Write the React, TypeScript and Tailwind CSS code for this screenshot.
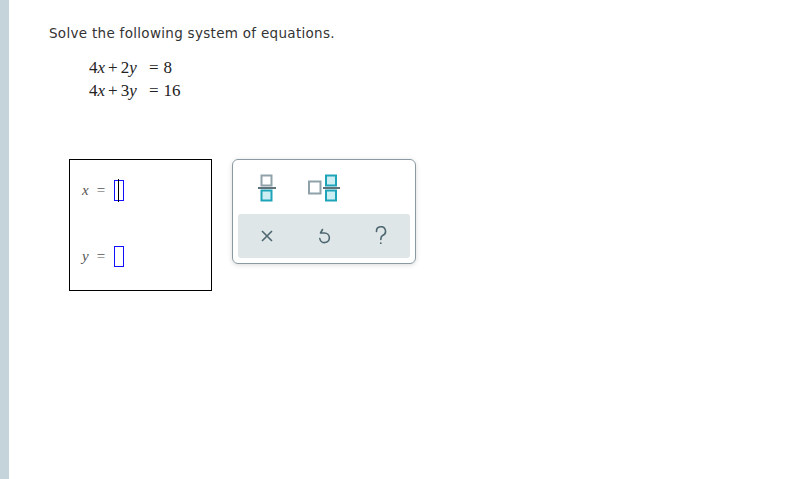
const FracIcon = () => (
  <svg width="18" height="28" viewBox="0 0 18 28">
    <rect x="3.5" y="1.5" width="10" height="10" fill="white" stroke="#8fa2a9" strokeWidth="2" />
    <rect x="0" y="13" width="18" height="2" fill="#5f7279" />
    <rect x="3.5" y="16.5" width="10" height="10" fill="#cdeef3" stroke="#1ea4b9" strokeWidth="2" />
  </svg>
);

const MixedIcon = () => (
  <svg width="32" height="28" viewBox="0 0 32 28">
    <rect x="1" y="7.5" width="11.5" height="12" fill="white" stroke="#8fa2a9" strokeWidth="2" />
    <rect x="15" y="13" width="17" height="2" fill="#5f7279" />
    <rect x="18" y="1.5" width="10" height="10" fill="#cdeef3" stroke="#1ea4b9" strokeWidth="2" />
    <rect x="18" y="16.5" width="10" height="10" fill="#cdeef3" stroke="#1ea4b9" strokeWidth="2" />
  </svg>
);

const Slot = ({ cursor }: { cursor?: boolean }) => (
  <span className="relative inline-block w-[10px] h-[21px] border-[1.5px] border-[#1010ff]">
    {cursor && (
      <span className="absolute left-[2.5px] top-[-2px] bottom-[-2px] w-px bg-black" />
    )}
  </span>
);

const Eq = ({ a, b, rhs }: { a: string; b: string; rhs: string }) => (
  <div className="flex">
    <span className="w-[60px]">
      {a}<i>x</i><span className="mx-[3px]">+</span>{b}<i>y</i>
    </span>
    <span>=<span className="ml-[5px]">{rhs}</span></span>
  </div>
);

export default function App() {
  return (
    <div className="flex w-[796px] h-[479px] bg-white">
      <div className="w-[9px] bg-[#c5d3da]" />
      <div className="flex-1 pl-[40px] pt-[23px]">
        <p className="text-[13.5px] leading-[20px] text-[#333] font-['DejaVu_Sans',sans-serif] tracking-[0.3px]">
          Solve the following system of equations.
        </p>
        <div className="pl-[40px] pt-[13px] font-['Liberation_Serif',serif] text-[17px] text-[#222] leading-[23px]">
          <Eq a="4" b="2" rhs="8" />
          <Eq a="4" b="3" rhs="16" />
        </div>
        <div className="flex items-start gap-[20px] mt-[57px] ml-[20px]">
          <div className="w-[143px] h-[132px] border border-black flex flex-col pl-[12px] pt-[20px] gap-[45px] font-['Liberation_Serif',serif] text-[15px] text-[#555]">
            <div className="flex items-center h-[21px]">
              <span className="w-[32px]"><i>x</i><span className="ml-[8px]">=</span></span>
              <Slot cursor />
            </div>
            <div className="flex items-center h-[21px]">
              <span className="w-[32px]"><i>y</i><span className="ml-[8px]">=</span></span>
              <Slot />
            </div>
          </div>
          <div className="w-[184px] h-[105px] border border-[#8a9aa1] rounded-[6px] shadow-[0_1px_5px_rgba(0,0,0,0.15)] flex flex-col px-[5px] pb-[5px]">
            <div className="flex items-center h-[54px] pt-[1px]">
              <div className="w-[57px] flex justify-center"><FracIcon /></div>
              <div className="w-[57px] flex justify-center"><MixedIcon /></div>
            </div>
            <div className="flex-1 bg-[#dfe6e8] rounded-[3px] flex items-center">
              <div className="w-[57px] flex justify-center">
                <svg width="14" height="14" viewBox="0 0 14 14" stroke="#4d6670" strokeWidth="1.6" fill="none">
                  <path d="M2 2 L12 12 M12 2 L2 12" />
                </svg>
              </div>
              <div className="w-[57px] flex justify-center">
                <svg width="14" height="17" viewBox="0 0 14 17" stroke="#4d6670" strokeWidth="1.6" fill="none" strokeLinecap="round" strokeLinejoin="round">
                  <path d="M5.5 1.5 L3.5 5 L7.5 5 A4.8 4.8 0 1 1 2.8 10.5" />
                </svg>
              </div>
              <div className="w-[57px] flex justify-center">
                <svg width="14" height="20" viewBox="0 0 14 20" stroke="#4d6670" strokeWidth="1.6" fill="none" strokeLinecap="round">
                  <path d="M2.5 5.5 A4.5 4.5 0 1 1 8.5 9.5 C7 10.3 6.8 11.5 6.8 13.5" />
                  <circle cx="6.8" cy="17.2" r="0.9" fill="#4d6670" stroke="none" />
                </svg>
              </div>
            </div>
          </div>
        </div>
      </div>
    </div>
  );
}
